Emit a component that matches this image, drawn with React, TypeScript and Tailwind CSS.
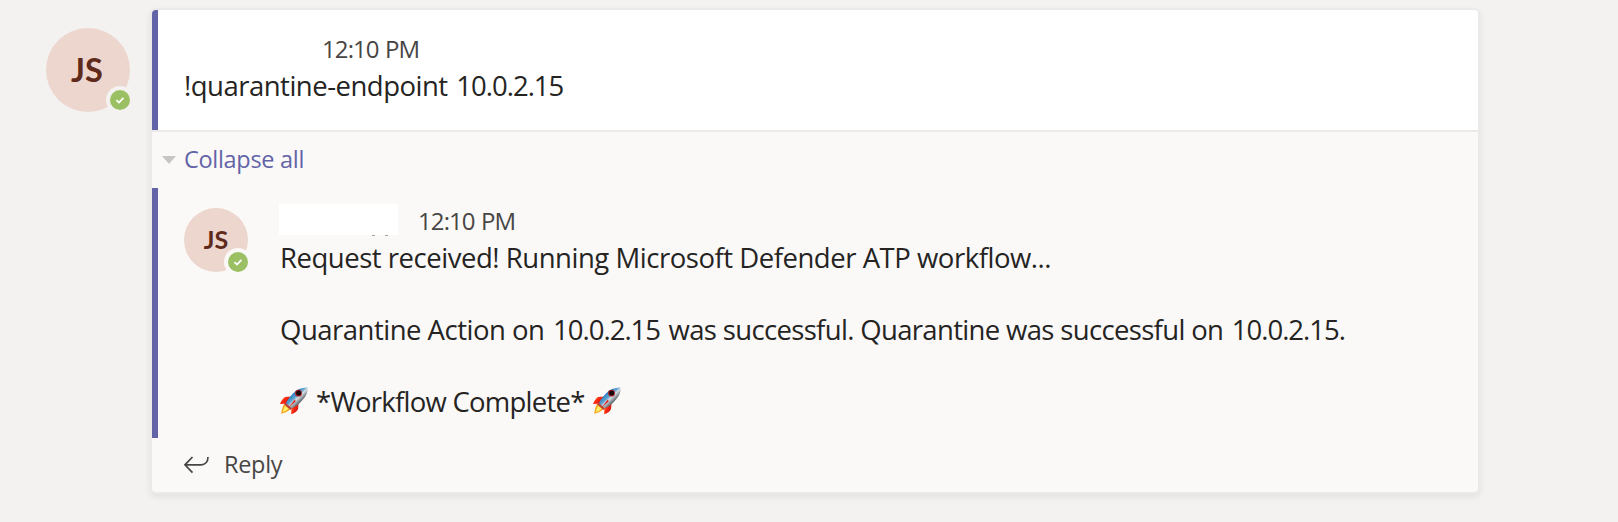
import React from "react";

function Avatar({ large = false }: { large?: boolean }) {
  return (
    <div
      className={
        large
          ? "relative ml-[46px] mt-5 flex h-[84px] w-[84px] shrink-0 items-center justify-center rounded-full bg-[#edd6ce] font-['Lato',sans-serif] text-[32.5px] font-bold text-[#5f2a1b]"
          : "relative mt-5 flex h-16 w-16 shrink-0 items-center justify-center rounded-full bg-[#edd6ce] font-['Lato',sans-serif] text-[25px] font-bold text-[#5f2a1b]"
      }
    >
      <span className={large ? "mr-0.5 leading-none" : "-mt-0.5 leading-none"}>JS</span>
      <span
        className={
          large
            ? "absolute -bottom-0.5 -right-1 flex h-7 w-7 items-center justify-center rounded-full bg-[#f3f2f1]"
            : "absolute -bottom-1 -right-1 flex h-7 w-7 items-center justify-center rounded-full bg-[#faf9f8]"
        }
      >
        <svg viewBox="0 0 20 20" className="h-5 w-5">
          <circle cx="10" cy="10" r="10" fill="#9bc063" />
          <path d="M6.4 10.2 9 12.6 13.4 7.9" fill="none" stroke="#fff" strokeWidth="1.8" />
        </svg>
      </span>
    </div>
  );
}

function Rocket() {
  return (
    <svg viewBox="0 0 28 28" className="mt-[3px] h-7 w-7 shrink-0">
      <defs>
        <linearGradient id="hull" x1="0.3" y1="0.3" x2="0.7" y2="0.7">
          <stop offset="0" stopColor="#2b7fc0" />
          <stop offset="0.35" stopColor="#5fa3d0" />
          <stop offset="0.55" stopColor="#d5dde2" />
          <stop offset="1" stopColor="#4b5359" />
        </linearGradient>
        <linearGradient id="fin" x1="0" y1="0" x2="1" y2="0.6">
          <stop offset="0" stopColor="#ff9a2e" />
          <stop offset="0.45" stopColor="#ff2a12" />
          <stop offset="1" stopColor="#c8130c" />
        </linearGradient>
      </defs>
      <path d="M12 9.5 5 10C3 11.5 1 14 0 17l8-.5Z" fill="url(#fin)" />
      <path d="M18.5 17 18 22c-.8 2.2-3 4.2-6.8 5.2L11.5 19Z" fill="url(#fin)" />
      <path d="M4 17C2.5 20 1.5 23.5 1.2 26.8 4.5 26 8.5 24.5 10.8 21.5Z" fill="#f8a51e" />
      <path d="M5 19C3.8 21 3 23.5 2.8 25.3 5 24.5 7.5 23 8.8 21.5Z" fill="#fff06a" />
      <path d="M27.6.6C22 .4 16.5 2.5 12.5 7 9 11 6.5 14 6 16.5c1 2.5 2.5 4 5 5 4-1 8-4.500 11.500-8.500C26.300 9.500 28 5 27.600.6Z" fill="url(#hull)" />
      <path d="m5.5 15.5 6.5 6-1.5 1.5L4 17.200Z" fill="#b9473c" />
      <circle cx="18.5" cy="6.2" r="3.4" fill="#b5202a" />
      <circle cx="18.6" cy="6.1" r="2.5" fill="#16090c" />
      <path d="m15 12.5-7 8.5 7.500-6.500Z" fill="#e01a12" />
    </svg>
  );
}

function Address() {
  return <span className="ml-[2px] tracking-[-1px]">10.0.2.15</span>;
}

function Time() {
  return <span className="tracking-[-0.9px] [word-spacing:1px]">12:10 PM</span>;
}

export default function App() {
  return (
    <main className="flex h-[522px] w-[1618px] items-start bg-[#f3f2f1] pt-2 font-['Open_Sans','Noto_Sans',sans-serif] text-[#252423]">
      <Avatar large />

      <article className="ml-5 box-content flex h-[482px] w-[1326px] shrink-0 flex-col overflow-hidden rounded-[6px] border-2 border-[#ebeae9] bg-[#faf9f8] shadow-[0_3px_7px_rgba(0,0,0,0.07)]">
        <header className="h-[122px] border-b-2 border-[#ebeae9] bg-white">
          <div className="h-[120px] border-l-[6px] border-[#6264a7] pl-[26px] pt-[21px]">
            <div className="pl-[138px] text-[24px] leading-9 text-[#484644]"><Time /></div>
            <div className="mt-px whitespace-nowrap text-[27.5px] leading-9 tracking-[-0.5px]">
              !quarantine-endpoint <Address />
            </div>
          </div>
        </header>
        <button className="flex h-14 shrink-0 items-center gap-2 pl-[10px] text-left text-[23.5px] text-[#6264a7]">
          <svg viewBox="0 0 14 8" className="h-2 w-3.5"><path d="M0 0h14L7 8Z" fill="#c8c6c4" /></svg>
          <span className="tracking-[-0.3px]">Collapse all</span>
        </button>
        <section className="flex h-[250px] shrink-0 border-l-[6px] border-[#6264a7] pl-[26px]">
          <Avatar />
          <div className="ml-8 whitespace-nowrap pt-4 text-[27.5px] leading-9">
            <div className="flex h-9 items-start text-[24px] leading-9 text-[#484644]">
              <div className="-ml-px w-[119px]">
                <div className="h-[31px] bg-white" />
                <div className="flex h-px justify-end gap-2.5 pr-2.5">
                  <span className="h-px w-[3px] bg-[#a8a6a4]" />
                  <span className="h-px w-[3px] bg-[#a8a6a4]" />
                </div>
              </div>
              <span className="-mt-px ml-5"><Time /></span>
            </div>
            <div className="tracking-[-0.47px]">Request received! Running Microsoft Defender ATP workflow...</div>
            <div className="mt-9 tracking-[-0.5px]">
              Quarantine Action on <Address />
              <span className="ml-[2px] tracking-[-0.66px]"> was successful. Quarantine was successful on </span>
              <Address />.
            </div>
            <div className="mt-9 flex tracking-[-0.75px]"><Rocket /><span className="mx-2">*Workflow Complete*</span><Rocket /></div>
          </div>
        </section>
        <button className="flex h-[54px] shrink-0 items-center pl-8 text-[23.5px] text-[#484644]">
          <svg viewBox="0 0 25 18" className="h-[18px] w-[25px]" fill="none" stroke="#484644" strokeWidth="1.7">
            <path d="M8.5 1 1 8.8 8.5 16.6M1 8.8H17C21 8.8 24 6 24 1" />
          </svg>
          <span className="-mt-px ml-[15px] tracking-[-0.3px]">Reply</span>
        </button>
      </article>
    </main>
  );
}
